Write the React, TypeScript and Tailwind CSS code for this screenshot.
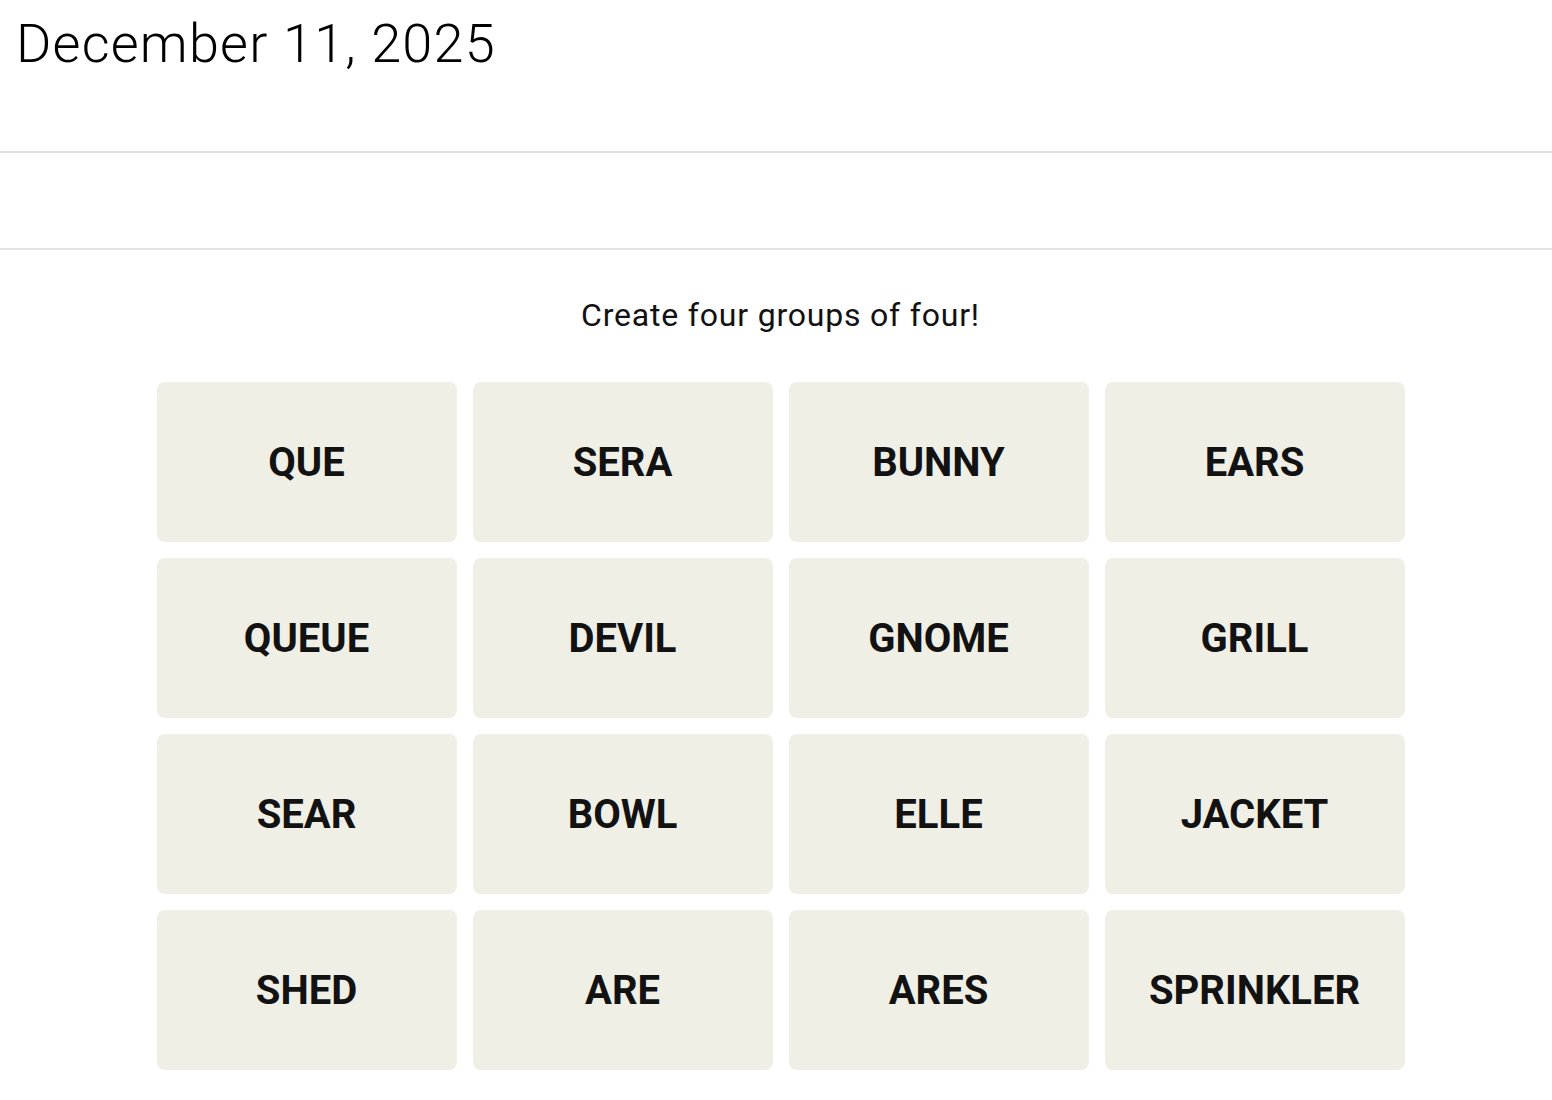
const words = [
  'QUE', 'SERA', 'BUNNY', 'EARS',
  'QUEUE', 'DEVIL', 'GNOME', 'GRILL',
  'SEAR', 'BOWL', 'ELLE', 'JACKET',
  'SHED', 'ARE', 'ARES', 'SPRINKLER',
]

function Tile({ word }: { word: string }) {
  return (
    <button
      type="button"
      className="h-[160px] rounded-[8px] bg-[#efefe6] flex items-center justify-center pt-[1px] text-[40px] font-bold text-[#121212]"
    >
      {word}
    </button>
  )
}

export default function App() {
  return (
    <div className="min-h-[1100px] bg-white text-black font-['Roboto',sans-serif]">
      <header className="h-[151px] px-[16px] pt-[17px]">
        <h1 className="text-[54px] font-light leading-none tracking-[1.2px] text-black">December 11, 2025</h1>
      </header>
      <div className="h-[2px] bg-[#e2e2e2]" />
      <div className="h-[95px]" />
      <div className="h-[2px] bg-[#e2e2e2]" />

      <main className="flex flex-col items-center pl-[9px]">
        <p className="mt-[49px] text-[32px] leading-none tracking-[0.8px] text-[#121212]">Create four groups of four!</p>
        <div className="mt-[51px] grid grid-cols-4 gap-[16px] w-[1248px]">
          {words.map((w) => (
            <Tile key={w} word={w} />
          ))}
        </div>
      </main>
    </div>
  )
}
